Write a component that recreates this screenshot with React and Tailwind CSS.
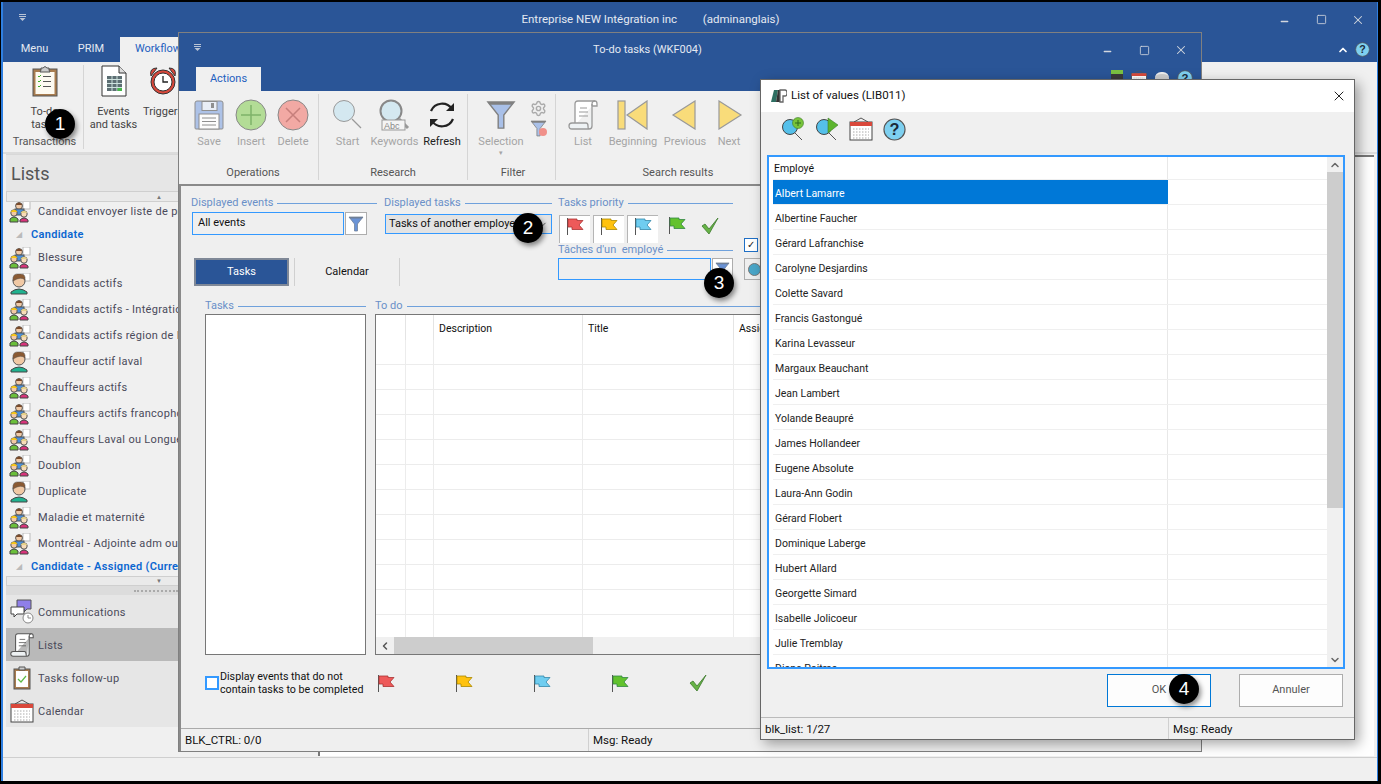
import React from "react";
import { Settings, ChevronUp, ChevronDown, ChevronLeft, X, Minus, Square } from "lucide-react";

const People = () => (
  <svg width="22" height="22" viewBox="0 0 22 22" className="shrink-0">
    <rect x="14" y="0" width="7" height="8" fill="#fff" stroke="#bbb" />
    <circle cx="10" cy="5" r="3.4" fill="#f1c9a5" stroke="#555" />
    <path d="M6.500 4 Q10 -1 13.500 4Z" fill="#7a4a2a" />
    <rect x="6" y="8" width="9" height="6" fill="#4a90d9" stroke="#555" />
    <circle cx="5" cy="12" r="3.2" fill="#f1c9a5" stroke="#555" />
    <path d="M1.500 11 Q5 6.500 8.500 11Z" fill="#f5c518" />
    <path d="M1 21 V18 Q5 14 9 18 V21Z" fill="#6abf3a" stroke="#444" />
    <circle cx="15" cy="13" r="3.2" fill="#f7dcb9" stroke="#555" />
    <path d="M11.500 12 Q15 7.500 18.500 12Z" fill="#e6d28a" />
    <path d="M11 21 V19 Q15 15 19 19 V21Z" fill="#d8337a" stroke="#444" />
  </svg>
);

const Person = () => (
  <svg width="22" height="22" viewBox="0 0 22 22" className="shrink-0">
    <rect x="14" y="0" width="7" height="8" fill="#fff" stroke="#bbb" />
    <circle cx="10" cy="8" r="6" fill="#f1c9a5" stroke="#555" />
    <path d="M4 8 Q3 0 10 1 Q17 0 16 7 Q12 3 4 8Z" fill="#8a5a33" stroke="#555" strokeWidth=".5" />
    <path d="M2 21 V19 Q10 13 18 19 V21Z" fill="#20b28f" stroke="#444" />
  </svg>
);

const Clipboard = () => (
  <svg width="26" height="32" viewBox="0 0 26 32" className="shrink-0">
    <rect x="1" y="4" width="24" height="27" fill="#a87c4f" stroke="#555" />
    <rect x="3.500" y="7" width="19" height="22" fill="#fdfaf1" />
    <path d="M9 5V3h2q2-3 4 0h2v2l1 2H8z" fill="#ccc" stroke="#555" />
    <path d="M6 11l1 1 2-2M6 16l1 1 2-2M6 21l1 1 2-2" stroke="#3fae2a" fill="none" />
    <path d="M11 11.500h8M11 16.500h8M11 21.500h8" stroke="#555" />
  </svg>
);

const EventsDoc = () => (
  <svg width="26" height="32" viewBox="0 0 26 32">
    <path d="M1 1h17l7 7v23H1z" fill="#fff" stroke="#333" />
    <path d="M18 1v7h7" fill="#ddd" stroke="#333" />
    <rect x="6" y="11" width="15" height="15" fill="#5d6e73" />
    <path d="M6 14.500h15M6 18.500h15M6 22.500h15M11 11v15M16 11v15" stroke="#cfe3df" />
    <rect x="16.500" y="23" width="4.500" height="3" fill="#45b649" />
  </svg>
);

const Alarm = () => (
  <svg width="30" height="32" viewBox="0 0 30 32">
    <path d="M3 11 Q1 3 9 3ZM27 11 Q29 3 21 3Z" fill="#d9483b" stroke="#333" />
    <circle cx="15" cy="17" r="12" fill="#d9483b" stroke="#333" />
    <circle cx="15" cy="17" r="9" fill="#fff" stroke="#333" />
    <path d="M15 11v6h5" stroke="#222" strokeWidth="1.300" fill="none" />
  </svg>
);

const Floppy = () => (
  <svg width="30" height="30" viewBox="0 0 30 30">
    <path d="M1 3q0-2 2-2h24q2 0 2 2v25q0 1-1 1H2q-1 0-1-1z" fill="#9db7e6" stroke="#777" />
    <rect x="8" y="1.500" width="15" height="9" fill="#e8eef8" stroke="#777" />
    <rect x="17" y="3" width="3" height="5" fill="#777" />
    <rect x="5" y="14" width="20" height="15" fill="#fff" stroke="#777" />
    <path d="M8 18h14M8 21.500h14M8 25h14" stroke="#777" />
  </svg>
);

const RoundBtn = ({ fill, type }) => (
  <svg width="32" height="32" viewBox="0 0 32 32">
    <circle cx="16" cy="16" r="15" fill={fill} stroke="#888" />
    {type === "plus" ? (
      <path d="M16 6v20M6 16h20" stroke="#7fb36a" strokeWidth="1.500" />
    ) : (
      <path d="M9 9l14 14M23 9L9 23" stroke="#c77f7c" strokeWidth="1.500" />
    )}
  </svg>
);

const Magnifier = ({ abc }) => (
  <svg width="32" height="32" viewBox="0 0 32 32">
    <circle cx="12" cy="12" r="10.500" fill="#d4e8f0" stroke={abc ? "#888" : "#999"} strokeWidth={abc ? 2 : 1} />
    <path d="M20 20l9 9" stroke="#999" strokeWidth={abc ? 3 : 1.200} />
    {abc && <rect x="3" y="21" width="23" height="10" fill="#f4f4f4" stroke="#999" />}
    {abc && <text x="5" y="29.500" fontSize="9" fill="#888" fontFamily="Liberation Sans, sans-serif">Abc</text>}
  </svg>
);

const Refresh = () => (
  <svg width="30" height="30" viewBox="0 0 30 30" fill="none" stroke="#222" strokeWidth="2.200">
    <path d="M4 11A12 12 0 0 1 25 9" />
    <path d="M26 19A12 12 0 0 1 5 21" />
    <path d="M27 3v8h-8z" fill="#222" strokeWidth="0" />
    <path d="M3 27v-8h8z" fill="#222" strokeWidth="0" />
  </svg>
);

const Funnel = ({ s = 30, fill = "#a9c0e8", stroke = "#808080" }) => (
  <svg width={s} height={s} viewBox="0 0 30 32">
    <path d="M1 2h28L18 16v14h-6V16z" fill={fill} stroke={stroke} strokeWidth="1.500" />
    <path d="M1 2h28l-2 3H3z" fill={stroke} />
  </svg>
);

const Scroll = ({ s = 30, stroke = "#999" }) => (
  <svg width={s} height={s} viewBox="0 0 30 30" fill="#fff" stroke={stroke} strokeWidth="1.300">
    <path d="M7 25V4q0-3 3-3h17q2 0 2 3v2h-5" />
    <path d="M24 6V4q0-3 3-3" fill="none" />
    <path d="M24 4v22q0 3-3 3H4q-3 0-3-3 0-3 3-3h14q2 0 2 3 0 3 1 3" fill="#eef2f4" />
    <path d="M12 8h7M11 12h9M11 16h9" strokeWidth="1" />
  </svg>
);

const Tri = ({ dir, bar }) => (
  <svg width="32" height="30" viewBox="0 0 32 30" fill="#f9dc7a" stroke="#999" strokeWidth="1.200">
    {bar && <rect x="1" y="1" width="7" height="28" />}
    {dir === "left" ? <path d={bar ? "M30 1v28L10 15z" : "M26 1v28L4 15z"} /> : <path d="M6 1v28l22-14z" />}
  </svg>
);

const Flag = ({ color, edge, s = 18 }) => (
  <svg width={s} height={s} viewBox="0 0 18 18" className="shrink-0">
    <path d="M1.500 1v17" stroke="#555" />
    <path d="M2 2h9v1.500h6L13 8l4 4.500H6V10H2z" fill={color} stroke={edge} strokeWidth=".8" />
  </svg>
);

const Check = () => (
  <svg width="19" height="18" viewBox="0 0 19 18">
    <path d="M1 9l3-2 4 5L17 1 8 17z" fill="#67b346" stroke="#3c7a2c" strokeWidth=".8" />
  </svg>
);

const Calendar = ({ s = 24 }) => (
  <svg width={s} height={s} viewBox="0 0 24 24">
    <path d="M5 5l7-4 7 4" fill="none" stroke="#555" />
    <rect x="1" y="5" width="22" height="18" fill="#fff" stroke="#444" />
    <rect x="1" y="5" width="22" height="4" fill="#d9483b" />
    <path d="M4 12h16M4 15h16M4 18h16M4 21h16" stroke="#aaa" strokeDasharray="1.500 1.500" />
  </svg>
);

const Comms = () => (
  <svg width="24" height="26" viewBox="0 0 24 26">
    <path d="M7 1h14v9h-4l-3 3v-3H7z" fill="#8f7fe8" stroke="#555" />
    <path d="M1 8h13v7H7l-3 3v-3H1z" fill="#fff" stroke="#444" />
    <circle cx="18" cy="19" r="5" fill="#fff" stroke="#888" />
    <path d="M18 16v3h3" fill="none" stroke="#888" />
  </svg>
);

const TaskBoard = () => (
  <svg width="18" height="24" viewBox="0 0 18 24">
    <rect x="1" y="3" width="16" height="20" fill="#a87c4f" stroke="#555" />
    <rect x="3" y="5" width="12" height="16" fill="#fff" />
    <path d="M6 1h6v3H6z" fill="#ccc" stroke="#555" />
    <path d="M5 13l3 3 5-6" stroke="#5dbb46" fill="none" strokeWidth="1.200" />
  </svg>
);

const PlusSearch = ({ arrow }) => (
  <svg width="24" height="24" viewBox="0 0 24 24">
    <circle cx="9" cy="10" r="7.500" fill="#55c0ea" stroke="#444" />
    <path d="M14 16l7 7" stroke="#555" />
    {arrow ? (
      <path d="M13 1l10 7-10 8z" fill="#5db52e" stroke="#3c7a2c" strokeWidth=".6" />
    ) : (
      <g>
        <circle cx="17" cy="6" r="5.500" fill="#78c43a" stroke="#3c7a2c" strokeWidth=".6" />
        <path d="M17 3v6M14 6h6" stroke="#2e6b1e" />
      </g>
    )}
  </svg>
);

const Help = ({ s = 23 }) => (
  <svg width={s} height={s} viewBox="0 0 24 24">
    <circle cx="12" cy="12" r="11" fill="#7ed0f0" stroke="#555" strokeWidth="1.200" />
    <text x="12" y="18" textAnchor="middle" fontSize="17" fontWeight="700" fill="#1b2a3a" fontFamily="Liberation Sans, sans-serif">?</text>
  </svg>
);

const Logo = () => (
  <svg width="16" height="14" viewBox="0 0 16 14">
    <path d="M0 13L3 1h4L5 13z" fill="#2e6f62" />
    <path d="M5 13L7 1h2v12z" fill="#333" />
    <path d="M9 13V1h5q2 0 2 3t-2 3h-2v6z" fill="none" stroke="#666" strokeWidth="1.300" />
  </svg>
);

const SysMenu = ({ className }) => (
  <svg width="7" height="7" viewBox="0 0 7 7" className={className}>
    <path d="M0 .5h7M0 2.500h7" stroke="#b9c4d6" />
    <path d="M.5 4h6L3.500 7z" fill="#b9c4d6" />
  </svg>
);

const WinControls = ({ className }) => (
  <div className={`flex items-center text-[#d3d7de] ${className}`}>
    <Minus size={11} strokeWidth={2.800} className="mr-[26px] mt-[3px]" />
    <Square size={11} strokeWidth={1.800} className="mr-[24px]" />
    <X size={14} strokeWidth={1.800} />
  </div>
);

const Badge = ({ n, className }) => (
  <div
    className={`absolute w-[30px] h-[30px] rounded-full bg-black text-white flex items-center justify-center text-[19px] shadow-[2px_3px_5px_rgba(0,0,0,0.45)] font-['Liberation_Sans',sans-serif] ${className}`}
  >
    {n}
  </div>
);

const FieldLabel = ({ children, className = "" }) => (
  <div className={`flex items-center gap-[4px] h-[14px] text-[#6a90c8] ${className}`}>
    <span className="whitespace-pre">{children}</span>
    <span className="flex-1 h-px bg-[#6fa1dc]" />
  </div>
);

const ToolBtn = ({ w, label, icon, dim = true }) => (
  <div className={`flex flex-col items-center shrink-0 ${w}`}>
    <div className="h-[36px] flex items-center justify-center">{icon}</div>
    <span className={`mt-[2px] leading-[14px] whitespace-nowrap ${dim ? "text-[#a5a5a5]" : "text-[#222]"}`}>{label}</span>
  </div>
);

const ToolGroup = ({ width, label, labelClass = "", children }) => (
  <div className={`flex flex-col shrink-0 border-r border-[#d5d5d5] h-[86px] mt-[3px] ${width}`}>
    <div className="flex flex-1 pt-[3px]">{children}</div>
    <div className={`text-center text-[#555] h-[15px] ${labelClass}`}>{label}</div>
  </div>
);

const ScrollRow = ({ up, h }) => (
  <div className={`bg-[#eaeaea] border border-[#cfcfcf] shrink-0 flex items-center justify-end pr-[153px] text-[#777] text-[6px] leading-none ${h}`}>
    {up ? "▲" : "▼"}
  </div>
);

const sideItems = [
  { t: "Candidat envoyer liste de présence", g: 1 },
  { h: "Candidate" },
  { t: "Blessure", g: 1 },
  { t: "Candidats actifs" },
  { t: "Candidats actifs - Intégration", g: 1 },
  { t: "Candidats actifs région de Montréal", g: 1 },
  { t: "Chauffeur actif laval" },
  { t: "Chauffeurs actifs", g: 1 },
  { t: "Chauffeurs actifs francophones", g: 1 },
  { t: "Chauffeurs Laval ou Longueuil", g: 1 },
  { t: "Doublon", g: 1 },
  { t: "Duplicate" },
  { t: "Maladie et maternité", g: 1 },
  { t: "Montréal - Adjointe adm ou secrétaire", g: 1 },
  { h: "Candidate - Assigned (Current)" },
];

const navItems = [
  { t: "Communications", icon: <Comms /> },
  { t: "Lists", icon: <Scroll s={24} stroke="#555" />, active: true },
  { t: "Tasks follow-up", icon: <TaskBoard /> },
  { t: "Calendar", icon: <Calendar /> },
];

const employees = [
  "Albert Lamarre",
  "Albertine Faucher",
  "Gérard Lafranchise",
  "Carolyne Desjardins",
  "Colette Savard",
  "Francis Gastongué",
  "Karina Levasseur",
  "Margaux Beauchant",
  "Jean Lambert",
  "Yolande Beaupré",
  "James Hollandeer",
  "Eugene Absolute",
  "Laura-Ann Godin",
  "Gérard Flobert",
  "Dominique Laberge",
  "Hubert Allard",
  "Georgette Simard",
  "Isabelle Jolicoeur",
  "Julie Tremblay",
  "Diane Poitras",
];

const flags = [
  ["#ee5a5a", "#a33"],
  ["#ffc20e", "#a80"],
  ["#6fcdf0", "#38a"],
  ["#62c22d", "#384"],
];

const Sidebar = () => (
  <div className="w-[310px] shrink-0 flex flex-col ml-[3px]">
    <div className="h-[37px] bg-[#e6e6e6] border-t border-[#d8d8d8] flex items-center pl-[5px] text-[18px] text-[#555]">Lists</div>
    <ScrollRow up h="h-[11px]" />
    <div className="h-[374px] shrink-0 overflow-hidden">
      <div className="-mt-[3px] tracking-[0.3px] text-[#4a4a5a]">
        {sideItems.map((s) =>
          s.h ? (
            <div key={s.h} className="h-[20px] flex items-center pl-[10px] font-semibold text-[#0b66d0] whitespace-nowrap">
              <span className="w-[15px] text-[#bbb] text-[8px] font-normal">◢</span>
              {s.h}
            </div>
          ) : (
            <div key={s.t} className="h-[26px] flex items-center pl-[3px] gap-[7px] whitespace-nowrap">
              {s.g ? <People /> : <Person />}
              {s.t}
            </div>
          )
        )}
      </div>
    </div>
    <ScrollRow h="h-[10px]" />
    <div className="h-[9px] bg-[#dcdcdc] shrink-0 flex items-center justify-end pr-[138px]">
      <span className="w-[44px] border-t-2 border-dotted border-[#aaa]" />
    </div>
    {navItems.map((n) => (
      <div key={n.t} className={`h-[33px] shrink-0 flex items-center tracking-[0.3px] text-[#4a4a5a] ${n.active ? "bg-[#b9b9b9]" : "bg-[#e6e6e6]"}`}>
        <span className="w-[32px] flex justify-center">{n.icon}</span>
        <span className="pt-[4px]">{n.t}</span>
      </div>
    ))}
  </div>
);

const TodoWindow = () => (
  <div className="absolute left-[178px] top-[32px] w-[1024px] h-[720px] border border-[#808080] bg-[#f0f0f0] flex flex-col text-[#222]">
    <div className="h-[34px] bg-[#2a5597] shrink-0 flex items-center relative">
      <SysMenu className="ml-[15px] -mt-[5px]" />
      <span className="flex-1 text-center text-[#e4e9f2] -ml-[8px]">To-do tasks (WKF004)</span>
      <WinControls className="mr-[13px]" />
    </div>
    <div className="h-[24px] bg-[#2a5597] shrink-0 flex items-end pl-[17px]">
      <div className="w-[65px] h-[24px] bg-[#f0f0f0] text-[#1f5fbf] flex items-center justify-center">Actions</div>
      <div className="ml-auto mr-[8px] h-[24px] flex items-start gap-[8px] pt-[3px]">
        <div className="w-[12px] h-[18px] bg-[#3a3a3a] border-t-[4px] border-[#7ac142]" />
        <Calendar s={16} />
        <div className="w-[14px] h-[16px] mt-[2px] bg-[#cfcfcf] rounded-t-md border-t-2 border-[#eee]" />
        <Help s={16} />
      </div>
    </div>
    <div className="h-[93px] shrink-0 flex pl-[8px] bg-[#f0f0f0]">
      <ToolGroup width="w-[132px] pl-[1px]" label="Operations">
        <ToolBtn w="w-[42px]" label="Save" icon={<div className="opacity-80"><Floppy /></div>} />
        <ToolBtn w="w-[42px]" label="Insert" icon={<RoundBtn fill="#b3dc96" type="plus" />} />
        <ToolBtn w="w-[42px]" label="Delete" icon={<RoundBtn fill="#f2a9a4" type="x" />} />
      </ToolGroup>
      <ToolGroup width="w-[149px]" label="Research">
        <ToolBtn w="w-[52px] pl-[5px]" label="Start" icon={<Magnifier />} />
        <ToolBtn w="w-[47px]" label="Keywords" icon={<Magnifier abc />} />
        <ToolBtn w="w-[48px]" label="Refresh" icon={<Refresh />} dim={false} />
      </ToolGroup>
      <ToolGroup width="w-[88px]" label="Filter" labelClass="pl-[3px]">
        <div className="w-[66px] flex flex-col items-center shrink-0">
          <div className="h-[36px] flex items-center"><Funnel /></div>
          <span className="mt-[2px] leading-[14px] text-[#a5a5a5]">Selection</span>
          <span className="text-[#a5a5a5] text-[7px] leading-[8px]">▾</span>
        </div>
        <div className="flex flex-col items-center gap-[3px] pt-[3px] -ml-[4px]">
          <Settings size={17} className="text-[#aaa]" />
          <div className="relative">
            <Funnel s={17} fill="#a9c0e8" />
            <div className="absolute right-[0px] bottom-[1px] w-[8px] h-[8px] rounded-full bg-[#f0908a]" />
          </div>
        </div>
      </ToolGroup>
      <div className="flex flex-col h-[86px] mt-[3px] w-[240px] shrink-0">
        <div className="flex flex-1 pt-[3px] pl-[6px]">
          <ToolBtn w="w-[42px]" label="List" icon={<Scroll />} />
          <ToolBtn w="w-[58px]" label="Beginning" icon={<Tri dir="left" bar />} />
          <ToolBtn w="w-[46px]" label="Previous" icon={<Tri dir="left" />} />
          <ToolBtn w="w-[42px]" label="Next" icon={<Tri dir="right" />} />
        </div>
        <div className="text-center text-[#555] h-[15px] pl-[4px] tracking-[0.1px]">Search results</div>
      </div>
    </div>
    <div className="flex-1 border-t-2 border-l-2 border-[#8a8a8a] bg-[#efefef] flex flex-col min-h-0">
      <div className="flex pl-[10px] pt-[10px] h-[100px] shrink-0">
        <div className="w-[361px] shrink-0">
          <div className="flex gap-[7px]">
            <div className="w-[186px]">
              <FieldLabel>Displayed events</FieldLabel>
              <div className="flex mt-[2px] ml-[1px] gap-[1px]">
                <div className="w-[152px] h-[23px] border border-[#3399ff] flex items-center pl-[5px] pb-[1px] text-[#111]">All events</div>
                <div className="w-[22px] h-[23px] border border-[#adadad] bg-white flex items-center justify-center"><Funnel s={16} fill="#6a93d6" stroke="#6f7f95" /></div>
              </div>
            </div>
            <div className="w-[168px]">
              <FieldLabel>Displayed tasks</FieldLabel>
              <div className="mt-[4px] ml-[1px] h-[20px] border border-[#3399ff] bg-[#e3e3e3] flex items-center pl-[3px] pr-[3px] pt-[1px] text-[#111]">
                <span className="flex-1 whitespace-nowrap">Tasks of another employee</span>
                <ChevronDown size={11} className="text-[#555]" />
              </div>
            </div>
          </div>
          <div className="flex mt-[23px] ml-[3px]">
            <div className="w-[95px] h-[28px] bg-[#2a5597] border-2 border-[#7f8897] text-white flex items-center justify-center">Tasks</div>
            <div className="w-[106px] h-[28px] ml-[5px] border-l border-r border-[#d0d0d0] flex items-center justify-center text-[#111]">Calendar</div>
          </div>
        </div>
        <div className="w-[175px] ml-[6px] shrink-0">
          <FieldLabel>Tasks priority</FieldLabel>
          <div className="flex mt-[5px] h-[28px] ml-[1px] items-start">
            {flags.slice(0, 3).map((f) => (
              <div key={f[0]} className="w-[31px] h-[28px] mr-[3px] bg-white border-t border-l border-[#b5b5b5] flex justify-center pt-[1px]"><Flag color={f[0]} edge={f[1]} /></div>
            ))}
            <div className="w-[31px] flex justify-center pt-[1px]"><Flag color={flags[3][0]} edge={flags[3][1]} /></div>
            <div className="w-[37px] flex justify-center pt-[2px]"><Check /></div>
          </div>
          <FieldLabel>Tâches d'un  employé</FieldLabel>
          <div className="flex mt-[1px] gap-[1px]">
            <div className="w-[153px] h-[22px] border border-[#3399ff]" />
            <div className="w-[21px] h-[22px] border border-[#adadad] bg-white flex items-center justify-center"><Funnel s={15} fill="#6a93d6" stroke="#6f7f95" /></div>
          </div>
        </div>
        <div className="ml-[11px] pt-[42px] shrink-0">
          <div className="w-[14px] h-[14px] border border-[#1f6fc5] bg-white flex items-center justify-center text-[10px] leading-none">✓</div>
          <div className="w-[20px] h-[22px] mt-[6px] border border-[#adadad] flex items-center justify-center">
            <span className="w-[13px] h-[13px] rounded-full bg-[#4aa6c8] border border-[#777]" />
          </div>
        </div>
      </div>
      <div className="flex pl-[24px] mt-[13px] shrink-0">
        <div className="w-[161px] shrink-0">
          <FieldLabel>Tasks</FieldLabel>
          <div className="h-[341px] mt-px border border-[#777] bg-white" />
        </div>
        <div className="w-[800px] ml-[9px] shrink-0">
          <FieldLabel>To do</FieldLabel>
          <div className="h-[341px] mt-px border border-[#777] bg-white flex flex-col">
            <div className="flex h-[25px] shrink-0 items-center text-[#111] text-[10.5px]">
              <div className="w-[30px] h-full border-r border-[#e4e4e4]" />
              <div className="w-[28px] h-full border-r border-[#e4e4e4]" />
              <div className="w-[149px] h-full border-r border-[#e4e4e4] pl-[5px] pt-[3px] flex items-center">Description</div>
              <div className="w-[151px] h-full border-r border-[#e4e4e4] pl-[5px] pt-[3px] flex items-center">Title</div>
              <div className="pl-[5px] pt-[3px]">Assigned</div>
            </div>
            <div className="flex-1 overflow-hidden">
              {Array.from({ length: 12 }).map((_, i) => (
                <div key={i} className="flex h-[25px] border-b border-[#ececec]">
                  <div className="w-[30px] border-r border-[#ececec]" />
                  <div className="w-[28px] border-r border-[#ececec]" />
                  <div className="w-[149px] border-r border-[#ececec]" />
                  <div className="w-[151px] border-r border-[#ececec]" />
                </div>
              ))}
            </div>
            <div className="h-[17px] shrink-0 bg-[#f0f0f0] flex items-center">
              <div className="w-[18px] flex justify-center"><ChevronLeft size={12} strokeWidth={3} className="text-[#555]" /></div>
              <div className="w-[199px] h-full bg-[#cdcdcd]" />
            </div>
          </div>
        </div>
      </div>
      <div className="flex pl-[24px] mt-[15px] shrink-0 items-center h-[26px]">
        <div className="w-[14px] h-[14px] border-2 border-[#3399ff] bg-white shrink-0" />
        <div className="ml-[1px] w-[157px] leading-[13px] text-[#111] text-[10.7px] whitespace-nowrap">Display events that do not<br />contain tasks to be completed</div>
        {flags.map((f) => (
          <div key={f[0]} className="w-[78px] flex"><Flag color={f[0]} edge={f[1]} /></div>
        ))}
        <Check />
      </div>
      <div className="mt-auto h-[23px] border-t border-[#aaa] flex items-center shrink-0 text-[#111] text-[11.5px]">
        <div className="w-[408px] pl-[4px] pt-[2px] border-r border-[#d0d0d0] h-full flex items-center">BLK_CTRL: 0/0</div>
        <div className="pl-[4px] pt-[2px]">Msg: Ready</div>
      </div>
    </div>
  </div>
);

const ListDialog = () => (
  <div className="absolute left-[760px] top-[79px] w-[595px] h-[661px] border border-[#666] bg-[#f0f0f0] flex flex-col text-[#222] shadow-[4px_4px_12px_rgba(0,0,0,0.35)]">
    <div className="h-[32px] bg-white flex items-center pl-[10px] shrink-0">
      <Logo />
      <span className="ml-[4px] text-[#111] text-[11.5px]">List of values (LIB011)</span>
      <X size={16} strokeWidth={1.300} className="ml-auto mr-[7px] text-black" />
    </div>
    <div className="h-[43px] shrink-0 flex items-center pl-[20px] pb-[9px] gap-[10px]">
      <PlusSearch />
      <PlusSearch arrow />
      <Calendar />
      <Help />
    </div>
    <div className="ml-[6px] mr-[9px] h-[514px] shrink-0 border-2 border-[#3399ff] bg-white flex overflow-hidden">
      <div className="flex-1 pl-[4px] min-w-0 text-[#222] text-[10.5px]">
        <div className="flex h-[23px] border-b border-[#efefef] text-[#111]">
          <div className="w-[395px] border-r border-[#e8e8e8] flex items-center pl-[1px] pt-[2px]">Employé</div>
        </div>
        {employees.map((e, i) => (
          <div key={e} className="flex h-[25px] border-b border-[#efefef]">
            <div className={`w-[395px] flex items-center pl-[2px] pt-[4px] border-r ${i === 0 ? "bg-[#0078d7] text-white border-[#0078d7]" : "border-[#e8e8e8]"}`}>{e}</div>
          </div>
        ))}
      </div>
      <div className="w-[16px] shrink-0 bg-[#f0f0f0] flex flex-col items-center">
        <div className="h-[15px] flex items-center"><ChevronUp size={12} strokeWidth={3} className="text-[#666]" /></div>
        <div className="w-full h-[336px] bg-[#cdcdcd]" />
        <div className="mt-auto h-[15px] flex items-center"><ChevronDown size={12} strokeWidth={3} className="text-[#666]" /></div>
      </div>
    </div>
    <div className="flex justify-end gap-[28px] mt-[5px] mr-[11px] shrink-0">
      <div className="w-[104px] h-[33px] border border-[#0078d7] bg-[#fdfdfd] flex items-center justify-center text-[#555]">OK</div>
      <div className="w-[104px] h-[33px] border border-[#adadad] bg-[#fdfdfd] flex items-center justify-center text-[#555]">Annuler</div>
    </div>
    <div className="mt-auto h-[22px] border-t border-[#bbb] flex items-center shrink-0 text-[#111] text-[11.5px]">
      <div className="w-[408px] pl-[4px] pt-[3px] border-r border-[#d0d0d0] h-full flex items-center">blk_list: 1/27</div>
      <div className="pl-[4px] pt-[3px]">Msg: Ready</div>
    </div>
  </div>
);

export default function App() {
  return (
    <div className="relative w-[1381px] h-[784px] overflow-hidden bg-black pt-[2px] pl-[1px] pr-[3px] pb-[3px] text-[11px] font-['Roboto',sans-serif]">
      <div className="h-full flex flex-col bg-[#f0f0f0] border-l-2 border-r border-[#2f7fe0]">
        <div className="h-[35px] bg-[#2a5597] shrink-0 flex items-center">
          <SysMenu className="ml-[16px] -mt-[5px]" />
          <span className="flex-1 text-center text-[#e4e9f2] text-[11.5px] whitespace-pre -ml-[4px]">Entreprise NEW Intégration inc         (adminanglais)</span>
          <WinControls className="mr-[12px]" />
        </div>
        <div className="h-[25px] bg-[#2a5597] shrink-0 flex items-end text-[#e4e9f2]">
          <span className="w-[59px] h-full flex items-center justify-center pl-[4px]">Menu</span>
          <span className="w-[58px] h-full flex items-center justify-center">PRIM</span>
          <span className="w-[62px] h-full bg-[#f0f0f0] text-[#1f5fbf] flex items-center pl-[15px] whitespace-nowrap">Workflow</span>
          <div className="ml-auto mr-[7px] h-full flex items-center gap-[6px]">
            <ChevronUp size={12} strokeWidth={3.500} className="text-white" />
            <Help s={15} />
          </div>
        </div>
        <div className="h-[92px] shrink-0 flex pl-[3px] bg-[#f0f0f0] border-b-2 border-[#dcdcdc]">
          <div className="w-[78px] border-r border-[#d5d5d5] my-[3px] flex flex-col items-center text-center text-[#444]">
            <Clipboard />
            <div className="leading-[13px] mt-[8px]">To-do<br />tasks</div>
            <div className="mt-[3px] text-[#555]">Transactions</div>
          </div>
          <div className="flex mt-[3px]">
            <div className="w-[59px] flex flex-col items-center text-center text-[#444]">
              <EventsDoc />
              <div className="leading-[13px] mt-[8px]">Events<br />and tasks</div>
            </div>
            <div className="flex flex-col items-center text-[#444]">
              <Alarm />
              <div className="leading-[13px] mt-[8px]">Triggers</div>
            </div>
          </div>
        </div>
        <div className="flex-1 flex min-h-0">
          <Sidebar />
          <div className="flex-1 mt-[1px] mb-[1px] ml-[2px] mr-[3px] border-t-2 border-l-2 border-[#777] bg-white" />
        </div>
        <div className="h-[24px] shrink-0 border-t border-[#cfcfcf]" />
      </div>

      <TodoWindow />
      <ListDialog />

      <Badge n="1" className="left-[45px] top-[109px]" />
      <Badge n="2" className="left-[513px] top-[213px]" />
      <Badge n="3" className="left-[704px] top-[268px]" />
      <Badge n="4" className="left-[1169px] top-[674px]" />
    </div>
  );
}
